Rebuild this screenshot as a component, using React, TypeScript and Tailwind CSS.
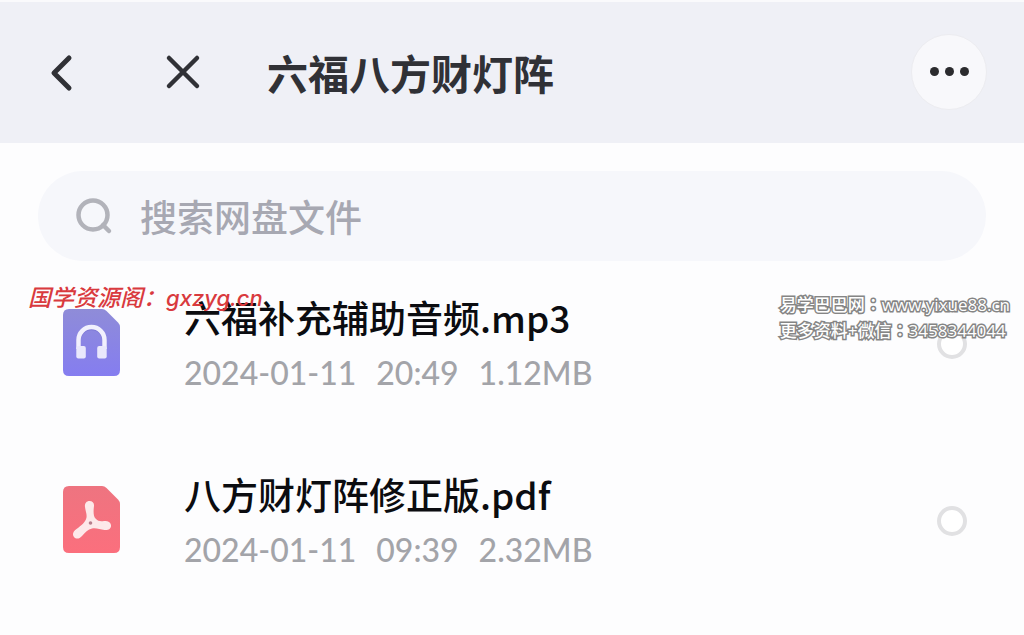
import React from "react";

interface FileEntry {
  id: string;
  name: string;
  date: string;
  time: string;
  size: string;
  kind: "audio" | "pdf";
}

const FILES: FileEntry[] = [
  {
    id: "file-audio",
    name: "六福补充辅助音频.mp3",
    date: "2024-01-11",
    time: "20:49",
    size: "1.12MB",
    kind: "audio",
  },
  {
    id: "file-pdf",
    name: "八方财灯阵修正版.pdf",
    date: "2024-01-11",
    time: "09:39",
    size: "2.32MB",
    kind: "pdf",
  },
];

// Sheet with a cut top-right corner, shared by both file icons
const SHEET =
  "M6 0H39Q41.500 0 43.500 2L55 13.500Q57 15.500 57 18V61Q57 67 51 67H6Q0 67 0 61V6Q0 0 6 0Z";

const AudioIcon: React.FC = () => (
  <svg width="57" height="67" viewBox="0 0 57 67" aria-hidden="true">
    <defs>
      <linearGradient id="audio-fill" x1="0" y1="0" x2="0" y2="1">
        <stop offset="0" stopColor="#8f8cd8" />
        <stop offset="1" stopColor="#857df0" />
      </linearGradient>
    </defs>
    <path d={SHEET} fill="url(#audio-fill)" />
    <path
      d="M15.500 41V32A13 13 0 0 1 41.500 32V41"
      fill="none"
      stroke="#6a62c8"
      strokeOpacity="0.4"
      strokeWidth="4.500"
    />
    <path d="M15.500 40V31A13 13 0 0 1 41.500 31V40" fill="none" stroke="#f1f0fd" strokeWidth="4.500" />
    <rect x="13.300" y="37" width="9.500" height="12.500" rx="2" fill="#e9e8fc" />
    <rect x="34.200" y="37" width="9.500" height="12.500" rx="2" fill="#e9e8fc" />
  </svg>
);

const PdfIcon: React.FC = () => (
  <svg width="57" height="67" viewBox="0 0 57 67" aria-hidden="true">
    <defs>
      <linearGradient id="pdf-fill" x1="0" y1="0" x2="0" y2="1">
        <stop offset="0" stopColor="#ee7480" />
        <stop offset="1" stopColor="#fb6f7d" />
      </linearGradient>
    </defs>
    <path d={SHEET} fill="url(#pdf-fill)" />
    <path
      d="M26.500 15C23 15 21.500 18 22 21C22.500 25 24 28 23.500 31.500C22.500 36 18.500 39.500 13.500 43C10 45.500 9 48.500 11 51C13 53.500 16.500 53 19 50C22 46.500 25 43.500 29 42.500C33 41.500 37 43.500 41.500 44C45.500 44.500 48.500 42.500 48 39C47.500 35.500 44 34.500 41 35C38 35.500 35 35.500 32.500 32.500C30 29.500 30.500 24 31 20C31.300 17 29.500 15 26.500 15Z"
      fill="#fde9ea"
    />
    <circle cx="27.500" cy="37" r="1.800" fill="#b77f8c" />
  </svg>
);

const Header: React.FC = () => (
  <header className="flex h-[143px] items-center border-t-2 border-[#fafafc] bg-[#eff0f6] pr-[37px] pb-0.5 pl-[37px] text-[#303136]">
    <button type="button" aria-label="返回" className="flex h-12 w-12 items-center justify-center">
      <svg width="24" height="40" viewBox="0 0 24 40" fill="none">
        <path
          d="M20 6L5 21L20 36"
          stroke="currentColor"
          strokeWidth="5"
          strokeLinecap="round"
          strokeLinejoin="round"
        />
      </svg>
    </button>
    <button
      type="button"
      aria-label="关闭"
      className="ml-[74px] flex h-12 w-12 items-center justify-center"
    >
      <svg width="36" height="36" viewBox="0 0 36 36" fill="none">
        <path d="M4 4L32 32M32 4L4 32" stroke="currentColor" strokeWidth="4.500" strokeLinecap="round" />
      </svg>
    </button>
    <h1 className="ml-[60px] text-[41px] leading-[60px] font-bold">六福八方财灯阵</h1>
    <button
      type="button"
      aria-label="更多"
      className="ml-auto flex h-[76px] w-[76px] items-center justify-center gap-[6px] rounded-full border border-[#ececf0] bg-[#f8f8fb]"
    >
      <span className="h-[9px] w-[9px] rounded-full bg-[#2b2b2e]" />
      <span className="h-[9px] w-[9px] rounded-full bg-[#2b2b2e]" />
      <span className="h-[9px] w-[9px] rounded-full bg-[#2b2b2e]" />
    </button>
  </header>
);

const SearchBox: React.FC = () => (
  <label className="mx-[38px] mt-7 flex h-[90px] items-center rounded-full bg-[#f6f7fb] px-9">
    <svg width="40" height="40" viewBox="0 0 40 40" fill="none" aria-hidden="true">
      <circle cx="19" cy="19" r="14.500" stroke="#b2b3ba" strokeWidth="4.500" />
      <path d="M29 29L35 35" stroke="#b2b3ba" strokeWidth="4.500" strokeLinecap="round" />
    </svg>
    <input
      type="text"
      aria-label="搜索网盘文件"
      placeholder="搜索网盘文件"
      className="ml-[26px] h-14 min-w-0 flex-1 bg-transparent text-[37px] font-medium outline-none placeholder:text-[#a7a8b2]"
    />
  </label>
);

const FileRow: React.FC<{ file: FileEntry }> = ({ file }) => (
  <li className="flex h-[177px] items-start pr-[57px] pl-[63px]">
    <div className="mt-4 shrink-0">{file.kind === "audio" ? <AudioIcon /> : <PdfIcon />}</div>
    <label htmlFor={file.id} className="ml-16 min-w-0 flex-1">
      <span className="block text-[37px] leading-[48px] font-medium text-[#0b0c10]">
        {file.name}
      </span>
      <span className="mt-3 flex gap-5 font-['Lato',sans-serif] text-[32px] leading-10 font-medium text-[#a3a4a9]">
        <span>{file.date}</span>
        <span>{file.time}</span>
        <span>{file.size}</span>
      </span>
    </label>
    <input
      id={file.id}
      type="checkbox"
      className="mt-9 h-[30px] w-[30px] shrink-0 appearance-none rounded-full border-4 border-[#e1e1e3] bg-white checked:bg-[#8e8bd6]"
    />
  </li>
);

export default function App() {
  return (
    <div className="relative min-h-screen overflow-hidden bg-[#fdfdfe] font-['Noto_Sans_CJK_SC',sans-serif]">
      <Header />
      <main>
        <SearchBox />
        <ul className="mt-8">
          {FILES.map((file) => (
            <FileRow key={file.id} file={file} />
          ))}
        </ul>
      </main>

      {/* Site marks laid over the list */}
      <p className="absolute top-[280px] left-7 text-[23px] leading-8 font-medium whitespace-nowrap text-[#d93a3e] italic">
        国学资源阁：<span className="font-['Inter'] text-[22px]">gxzyg.cn</span>
      </p>
      <p className="absolute top-[292px] right-[14px] font-['Open_Sans','Noto_Sans_CJK_TC',sans-serif] text-[17px] leading-[26px] font-medium whitespace-nowrap text-white [-webkit-text-stroke:3px_#858585] [paint-order:stroke_fill]">
        易学巴巴网：www.yixue88.cn
        <br />
        更多资料+微信：3458344044
      </p>
    </div>
  );
}
